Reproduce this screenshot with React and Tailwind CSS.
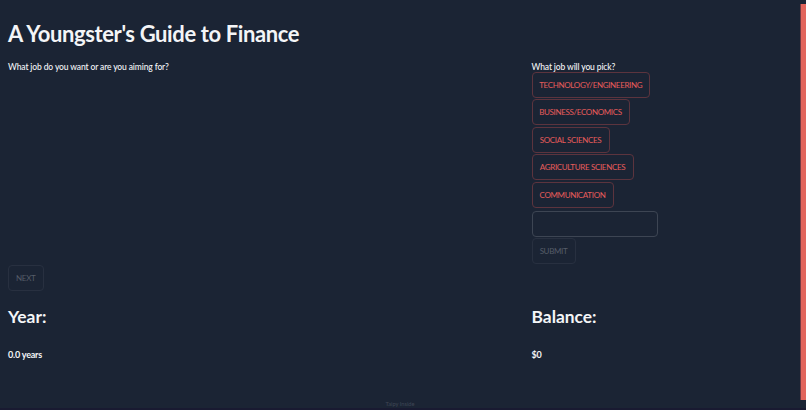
import clsx from "clsx";

const jobs = [
  { label: "TECHNOLOGY/ENGINEERING", width: "w-[118.5px]" },
  { label: "BUSINESS/ECONOMICS", width: "w-[98px]" },
  { label: "SOCIAL SCIENCES", width: "w-[78px]" },
  { label: "AGRICULTURE SCIENCES", width: "w-[102px]" },
  { label: "COMMUNICATION", width: "w-[82px]" },
];

function OutlineButton({ children, className, disabled }) {
  return (
    <button
      disabled={disabled}
      className={clsx(
        "flex h-[26px] items-center justify-center rounded-[4px] border text-[8px] leading-none tracking-[-0.34px] whitespace-nowrap",
        disabled ? "border-[#283040] text-[#555c68]" : "border-[#5c343e] text-[#e85c5b]",
        className
      )}
    >
      {children}
    </button>
  );
}

function Label({ children }) {
  return <p className="pt-px text-[8.5px] leading-[10px] font-medium tracking-[-0.12px]">{children}</p>;
}

function Stat({ title, value }) {
  return (
    <div>
      <h2 className="text-[17.4px] leading-[26px] font-bold">{title}</h2>
      <p className="mt-[18px] text-[9px] leading-[14px] font-bold tracking-[-0.2px]">{value}</p>
    </div>
  );
}

export default function App() {
  return (
    <div className="flex h-[410px] w-[806px] overflow-hidden border-b-2 border-[#191a31] bg-[#1b2434] font-['Lato',sans-serif] text-[#f4f5f7]">
      <main className="flex flex-1 flex-col">
        <h1 className="mt-[18px] ml-2 text-[22px] leading-[31px] font-bold tracking-[-0.38px]">A Youngster's Guide to Finance</h1>

        <div className="mt-3 ml-2 grid h-[204px] grid-cols-[523.5px_1fr]">
          <Label>What job do you want or are you aiming for?</Label>
          <div className="flex flex-col items-start">
            <Label>What job will you pick?</Label>
            <div className="flex flex-col items-start gap-[1.4px]">
              {jobs.map((job) => (
                <OutlineButton key={job.label} className={job.width}>{job.label}</OutlineButton>
              ))}
            </div>
            <input className="mt-[3px] h-[26px] w-[126px] rounded-[4px] border border-[#3d4553] bg-transparent px-2 text-[8px]" />
            <OutlineButton disabled className="mt-px w-11">SUBMIT</OutlineButton>
          </div>
        </div>

        <OutlineButton disabled className="ml-2 w-[35.5px]">NEXT</OutlineButton>

        <div className="mt-[13px] ml-2 grid grid-cols-[523.5px_1fr]">
          <Stat title="Year:" value="0.0 years" />
          <Stat title="Balance:" value="$0" />
        </div>

        <footer className="mt-auto text-center text-[5.7px] leading-[8px] text-[#3f4755]">Taipy Inside</footer>
      </main>

      <div className="w-[6px] pt-[4px]">
        <div className="h-[396px] border-l border-[#753b43] bg-[#e2655c]" />
      </div>
    </div>
  );
}
